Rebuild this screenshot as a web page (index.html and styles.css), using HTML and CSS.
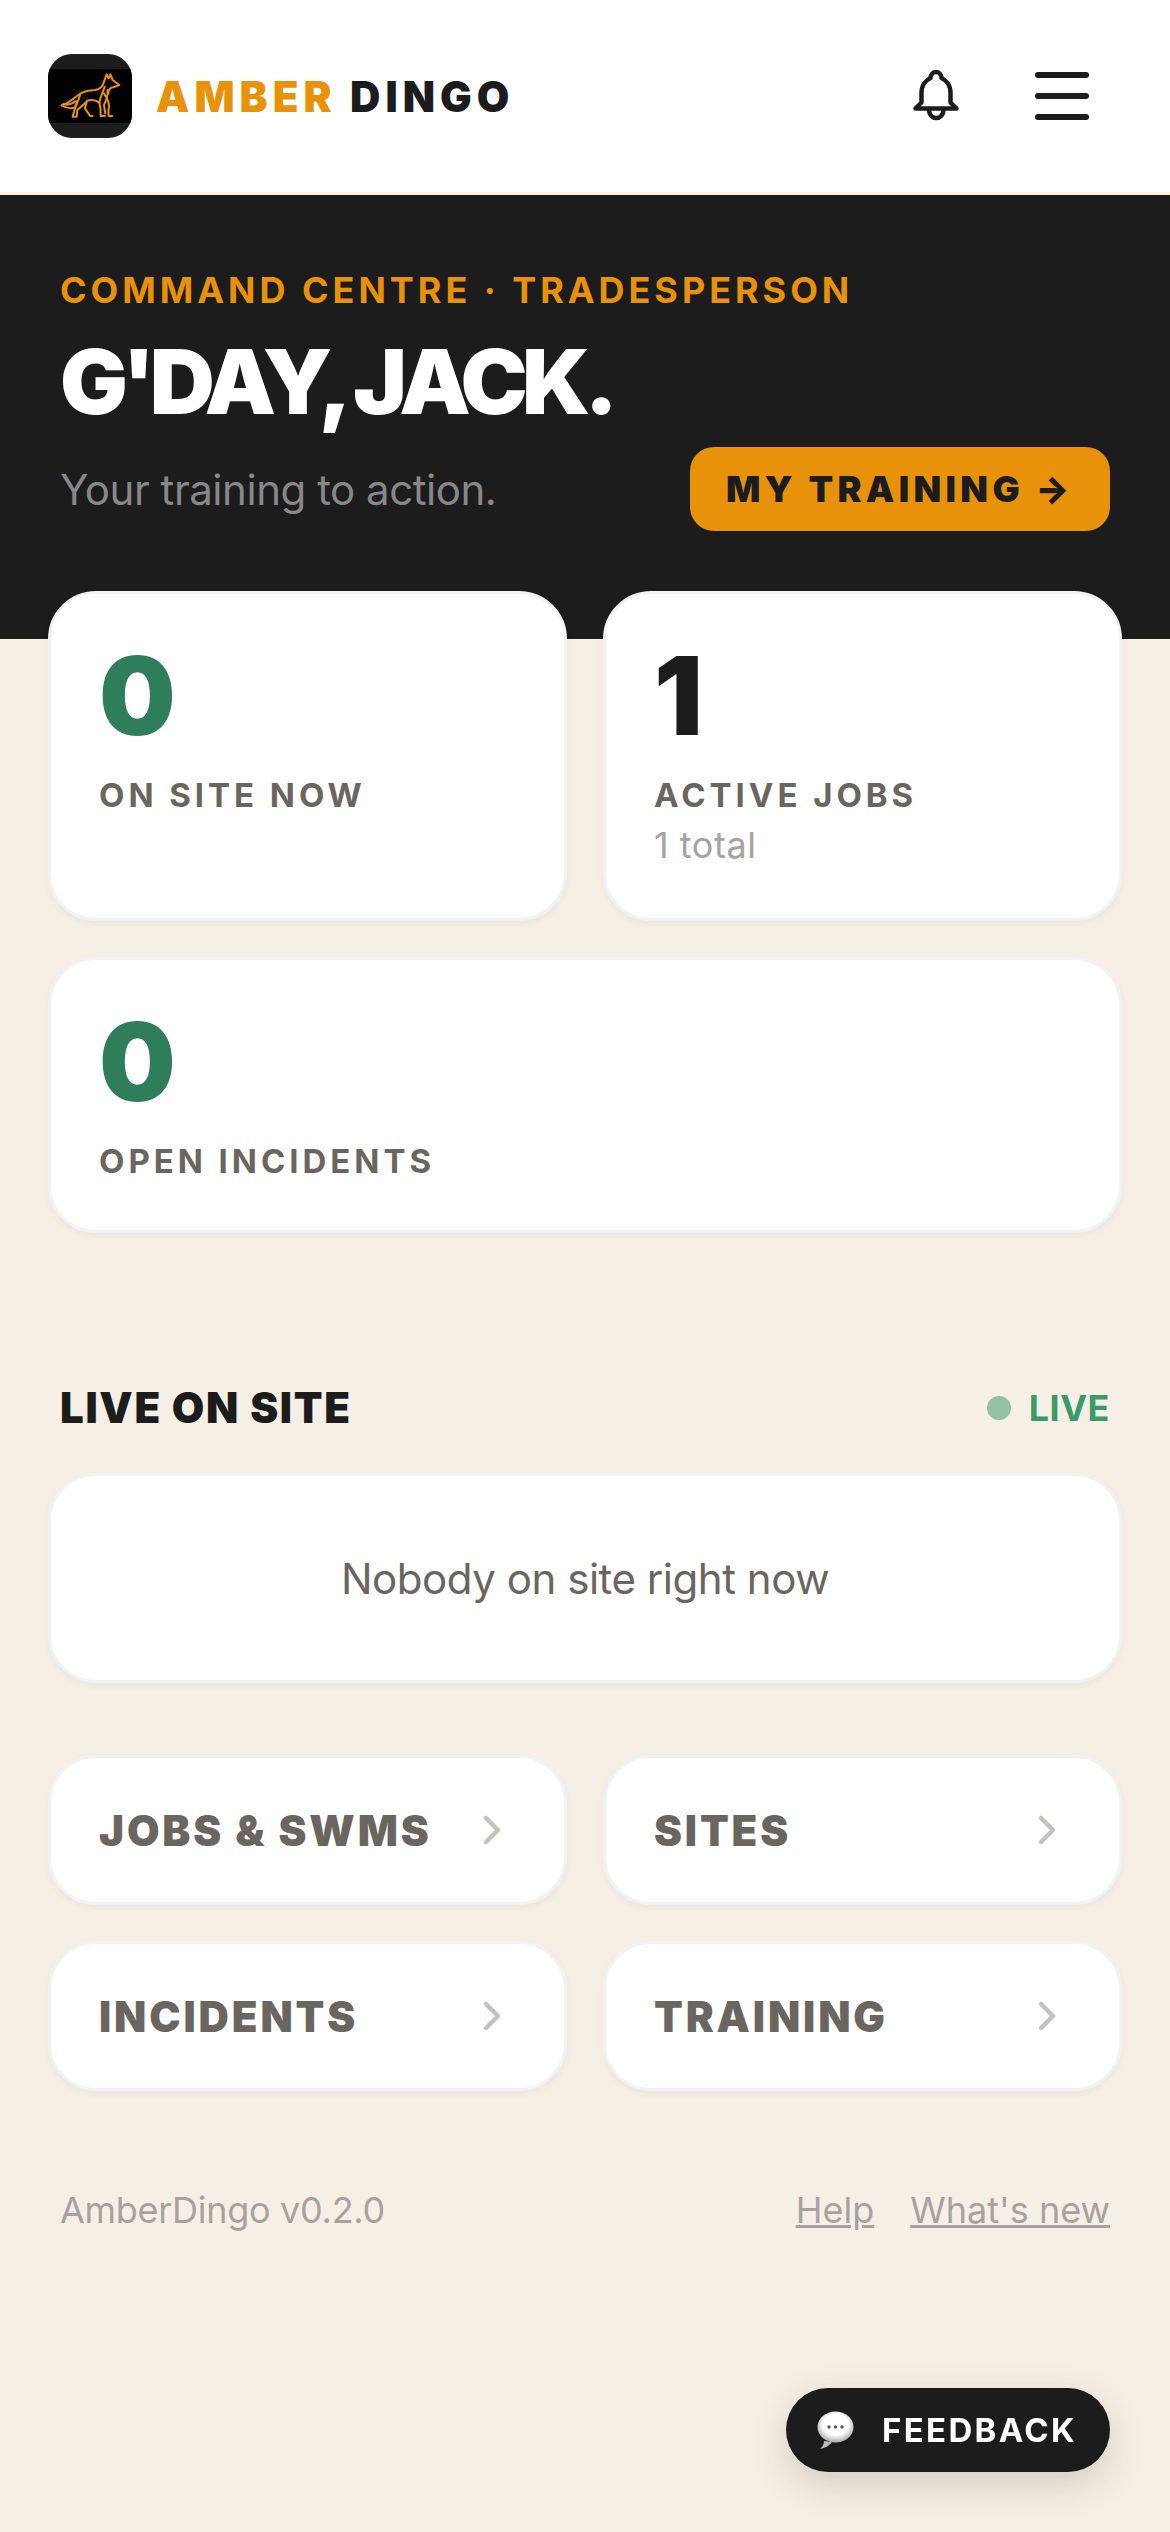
FILE: index.html
```html
<!DOCTYPE html>
<html lang="en">
<head>
  <meta charset="UTF-8" />
  <meta name="viewport" content="width=device-width, initial-scale=1.0" />
  <title>AmberDingo</title>
  <link rel="stylesheet" href="styles.css">
</head>
<body>

  <header class="topbar">
    <div class="brand">
      <div class="logo">
        <svg class="logo-art" viewBox="54 117 252 162" aria-hidden="true">
          <rect x="54" y="117" width="252" height="162" fill="#000"/>
          <g fill="none" stroke="#e8920a" stroke-width="6" stroke-linecap="round" stroke-linejoin="round">
            <path d="M95 226 C115 222 130 205 145 195 C160 182 175 182 195 180 C210 178 218 170 222 155 L230 133 L236 145 L241 133 L248 150 L268 165 L250 172 C240 172 236 180 235 190"/>
            <path d="M95 226 C110 235 125 236 135 232 L142 212"/>
            <path d="M100 222 C115 226 125 224 136 214"/>
            <path d="M150 195 C145 215 135 230 132 245 L128 260 L140 260 L142 240 L170 215 L165 235 L180 258 L188 258"/>
            <path d="M170 213 C185 208 200 212 208 218"/>
            <path d="M222 190 C232 205 242 225 235 240 L236 258 L247 258"/>
            <path d="M208 218 C212 232 213 245 212 258 L225 258"/>
            <path d="M224 170 C220 185 212 195 208 218"/>
            <path d="M232 180 C236 200 226 215 222 225 L226 250"/>
          </g>
        </svg>
      </div>
      <div class="brand-name"><span class="amber">AMBER</span> DINGO</div>
    </div>
    <div class="top-actions">
      <button class="bell-btn" type="button" aria-label="Notifications">
        <svg width="60" height="60" viewBox="0 0 60 60" fill="none" stroke="#1c1c1c" stroke-width="4.5" stroke-linecap="round" stroke-linejoin="round">
          <path d="M9.5 42.5 H50.5 L44.5 36.5 V27 C44.5 19 40 14 35.5 12 C35.5 8.5 33 6 30 6 C27 6 24.5 8.5 24.5 12 C20 14 15.5 19 15.5 27 V36.5 Z"/>
          <path d="M23 44 a7.25 8 0 0 0 14.5 0"/>
        </svg>
      </button>
      <button class="menu-btn" type="button" aria-label="Menu">
        <span></span><span></span><span></span>
      </button>
    </div>
  </header>

  <section class="hero">
    <div class="eyebrow">COMMAND CENTRE · TRADESPERSON</div>
    <h1>G'DAY, JACK.</h1>
    <div class="hero-row">
      <p>Your training to action.</p>
      <a class="cta" href="#">MY TRAINING →</a>
    </div>
  </section>

  <main class="content">
    <div class="stats">
      <div class="card stat">
        <div class="stat-num green">0</div>
        <div class="stat-label">ON SITE NOW</div>
      </div>
      <div class="card stat">
        <div class="stat-num">1</div>
        <div class="stat-label">ACTIVE JOBS</div>
        <div class="stat-sub">1 total</div>
      </div>
      <div class="card stat wide">
        <div class="stat-num green">0</div>
        <div class="stat-label">OPEN INCIDENTS</div>
      </div>
    </div>

    <div class="section-head">
      <h2>LIVE ON SITE</h2>
      <div class="live"><span class="dot"></span>LIVE</div>
    </div>

    <div class="card empty">Nobody on site right now</div>

    <nav class="tiles">
      <a class="card tile" href="#">JOBS &amp; SWMS
        <svg width="48" height="48" viewBox="0 0 48 48"><path d="M18 12 L30 24 L18 36"/></svg>
      </a>
      <a class="card tile" href="#">SITES
        <svg width="48" height="48" viewBox="0 0 48 48"><path d="M18 12 L30 24 L18 36"/></svg>
      </a>
      <a class="card tile" href="#">INCIDENTS
        <svg width="48" height="48" viewBox="0 0 48 48"><path d="M18 12 L30 24 L18 36"/></svg>
      </a>
      <a class="card tile" href="#">TRAINING
        <svg width="48" height="48" viewBox="0 0 48 48"><path d="M18 12 L30 24 L18 36"/></svg>
      </a>
    </nav>

    <footer class="foot">
      <span>AmberDingo v0.2.0</span>
      <div class="foot-links">
        <a href="#">Help</a>
        <a href="#">What's new</a>
      </div>
    </footer>
  </main>

  <button class="feedback" type="button">
    <svg width="39" height="39" viewBox="0 0 39 39" aria-hidden="true">
      <defs>
        <radialGradient id="bubble" cx="50%" cy="42%" r="58%">
          <stop offset="60%" stop-color="#ffffff"/>
          <stop offset="100%" stop-color="#a9a9a9"/>
        </radialGradient>
      </defs>
      <path d="M4 38 C7 35 8 33 8 30 L16 31 C13 35 9 37 4 38 Z" fill="#bdbdbd"/>
      <ellipse cx="19.5" cy="16" rx="18" ry="15.5" fill="url(#bubble)"/>
      <circle cx="13" cy="16" r="1.7" fill="#555"/>
      <circle cx="19.5" cy="16" r="1.7" fill="#555"/>
      <circle cx="26" cy="16" r="1.7" fill="#555"/>
    </svg>
    FEEDBACK
  </button>

</body>
</html>
```

FILE: styles.css
```css
* {
  box-sizing: border-box;
}
body {
  margin: 0;
  min-height: 100vh;
  background: #f5efe6;
  color: #1c1c1c;
  font-family: Inter, "Noto Sans", sans-serif;
}
a {
  color: inherit;
  text-decoration: none;
}
button {
  font-family: inherit;
  border: none;
  background: none;
  padding: 0;
}

/* top bar */
.topbar {
  height: 195px;
  padding: 0 66px 0 48px;
  display: flex;
  align-items: center;
  justify-content: space-between;
  background: #fff;
  border-bottom: 3px solid #fdf0d0;
}
.brand {
  display: flex;
  align-items: center;
  gap: 24px;
}
.logo {
  width: 84px;
  height: 84px;
  border-radius: 24px;
  background: #1c1c1c;
  display: flex;
  align-items: center;
  overflow: hidden;
}
.logo-art {
  display: block;
  width: 84px;
  height: 54px;
}
.brand-name {
  font-size: 42px;
  font-weight: 900;
  letter-spacing: 0.12em;
}
.amber {
  color: #e8920a;
}
.top-actions {
  display: flex;
  align-items: center;
  gap: 42px;
}
.bell-btn {
  width: 84px;
  height: 84px;
  display: flex;
  align-items: center;
  justify-content: center;
}
.menu-btn {
  width: 84px;
  height: 84px;
  display: flex;
  flex-direction: column;
  align-items: center;
  justify-content: center;
  gap: 15px;
}
.menu-btn span {
  width: 54px;
  height: 6px;
  border-radius: 3px;
  background: #1c1c1c;
}

/* hero */
.hero {
  height: 444px;
  padding: 73px 60px 0;
  background: #1c1c1c;
}
.eyebrow {
  font-size: 36px;
  line-height: 44px;
  font-weight: 700;
  letter-spacing: 0.11em;
  color: #e8920a;
}
.hero h1 {
  margin: 20px 0 0;
  font-size: 90px;
  line-height: 99px;
  font-weight: 900;
  letter-spacing: -0.065em;
  color: #fff;
}
.hero-row {
  margin-top: 16px;
  display: flex;
  align-items: center;
  justify-content: space-between;
}
.hero-row p {
  margin: 0;
  font-size: 42px;
  letter-spacing: -0.011em;
  color: #888;
}
.cta {
  width: 420px;
  height: 84px;
  border-radius: 24px;
  background: #e8920a;
  color: #1c1c1c;
  display: flex;
  align-items: center;
  justify-content: center;
  font-size: 36px;
  font-weight: 900;
  letter-spacing: 0.12em;
}

/* cards */
.content {
  padding: 0 48px;
}
.card {
  background: #fff;
  border: 3px solid #f1f2f3;
  border-radius: 48px;
  box-shadow: 0 3px 6px rgba(60, 50, 30, 0.05);
}
.stats {
  margin-top: -48px;
  display: grid;
  grid-template-columns: 1fr 1fr;
  gap: 36px;
}
.stat {
  padding: 48px;
}
.wide {
  grid-column: span 2;
}
.stat-num {
  font-size: 108px;
  line-height: 108px;
  font-weight: 900;
}
.green {
  color: #2e7d5b;
}
.stat-label {
  margin-top: 24px;
  font-size: 33px;
  line-height: 42px;
  font-weight: 700;
  letter-spacing: 0.12em;
  color: #6b6560;
}
.stat-sub {
  margin-top: 5px;
  font-size: 36px;
  line-height: 49px;
  letter-spacing: 0.015em;
  color: #a8a29e;
}

/* live section */
.section-head {
  margin-top: 149px;
  padding: 0 12px;
  display: flex;
  align-items: center;
  justify-content: space-between;
}
.section-head h2 {
  margin: 0;
  font-size: 42px;
  line-height: 51px;
  font-weight: 900;
  letter-spacing: 0.04em;
}
.live {
  display: flex;
  align-items: center;
  gap: 18px;
  font-size: 36px;
  font-weight: 700;
  letter-spacing: 0.015em;
  color: #3a9a6a;
}
.dot {
  width: 24px;
  height: 24px;
  border-radius: 50%;
  background: #94c0a4;
}
.empty {
  margin-top: 40px;
  height: 210px;
  display: flex;
  align-items: center;
  justify-content: center;
  font-size: 42px;
  letter-spacing: -0.011em;
  color: #6b6560;
}

/* nav tiles */
.tiles {
  margin-top: 72px;
  display: grid;
  grid-template-columns: 1fr 1fr;
  gap: 36px;
}
.tile {
  height: 150px;
  padding: 0 48px;
  display: flex;
  align-items: center;
  justify-content: space-between;
  font-size: 42px;
  font-weight: 900;
  letter-spacing: 0.068em;
  color: #6b6560;
}
.tile svg {
  fill: none;
  stroke: #c5c1bb;
  stroke-width: 4.5;
  stroke-linecap: round;
  stroke-linejoin: round;
}

/* footer */
.foot {
  margin-top: 97px;
  padding: 0 12px;
  display: flex;
  justify-content: space-between;
  font-size: 36px;
  color: #a8a29e;
}
.foot > span {
  letter-spacing: -0.008em;
}
.foot-links {
  display: flex;
  gap: 36px;
}
.foot-links a {
  text-decoration: underline;
}

/* feedback button floats over the page */
.feedback {
  position: fixed;
  right: 60px;
  bottom: 60px;
  width: 324px;
  height: 84px;
  padding: 0 30px;
  display: flex;
  align-items: center;
  gap: 27px;
  border-radius: 42px;
  background: #1c1c1c;
  color: #fff;
  font-size: 33px;
  font-weight: 700;
  letter-spacing: 0.07em;
  box-shadow: 0 12px 36px rgba(60, 50, 30, 0.18);
}
```
